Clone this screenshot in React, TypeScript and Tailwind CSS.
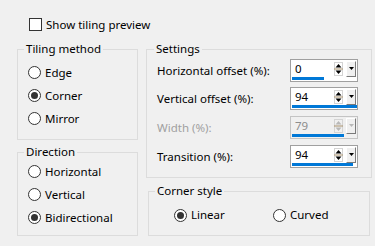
import type { ReactNode } from "react";

function Radio({ checked, label }: { checked?: boolean; label: string }) {
  return (
    <div className="flex items-center gap-[4px]">
      <span className="w-[13px] h-[13px] rounded-full border border-[#333333] bg-white flex items-center justify-center shrink-0">
        {checked && <span className="w-[7px] h-[7px] rounded-full bg-[#333333]" />}
      </span>
      <span className="leading-[16px]">{label}</span>
    </div>
  );
}

function Group({ title, className, legendClass, children }: { title: string; className: string; legendClass: string; children: ReactNode }) {
  return (
    <fieldset className={`border border-[#dcdcdc] ${className}`}>
      <legend className={`px-[2px] leading-[16px] ${legendClass}`}>{title}</legend>
      {children}
    </fieldset>
  );
}

function SpinIcon({ disabled }: { disabled?: boolean }) {
  const c = disabled ? "#b8b8b8" : "#000";
  return (
    <svg width="9" height="14" viewBox="0 0 9 14" className="shrink-0">
      <rect x="0.5" y="0.5" width="8" height="13" fill="none" stroke="#d4d4d4" />
      <path d="M4.5 2 L7.5 5.5 L1.5 5.5 Z" fill={c} />
      <line x1="0" y1="7" x2="9" y2="7" stroke="#a8916c" />
      <path d="M1.5 8.5 L7.5 8.5 L4.5 12 Z" fill={c} />
    </svg>
  );
}

function Spin({ value, bar, disabled }: { value: string; bar: number; disabled?: boolean }) {
  return (
    <div className={`w-[68px] h-[23px] border flex flex-col ${disabled ? "bg-[#f0f0f0] border-[#c4c4c4]" : "bg-white border-[#a0a0a0]"}`}>
      <div className="flex items-center flex-1">
        <span className={`pl-[4px] flex-1 leading-[16px] pt-[1px] ${disabled ? "text-[#8d8d8d]" : "text-black"}`}>{value}</span>
        <SpinIcon disabled={disabled} />
        <span className="ml-[3px] mr-[1px] w-[10px] h-[16px] border-t border-l border-white border-r border-b border-r-[#7a7a7a] border-b-[#7a7a7a] bg-[#f0f0f0] flex items-center justify-center">
          <svg width="5" height="3" viewBox="0 0 5 3">
            <path d="M0 0 L5 0 L2.5 3 Z" fill={disabled ? "#b8b8b8" : "#000"} />
          </svg>
        </span>
      </div>
      <div className="h-[3px] mb-[1px] ml-[1px] bg-[#0078d7]" style={{ width: bar }} />
    </div>
  );
}

function Row({ label, value, bar, disabled, className }: { label: string; value: string; bar: number; disabled?: boolean; className?: string }) {
  return (
    <div className={`flex items-center justify-between h-[23px] ${className ?? ""}`}>
      <span className={`leading-[16px] ${disabled ? "text-[#a0a0a0]" : "text-black"}`}>{label}</span>
      <Spin value={value} bar={bar} disabled={disabled} />
    </div>
  );
}

export default function App() {
  return (
    <div className="w-[375px] h-[246px] bg-[#f0f0f0] overflow-hidden text-black text-[11.5px] font-['Noto_Sans',sans-serif] pl-[17px]">
      <div className="flex items-center gap-[4px] ml-[12px] mt-[18px] h-[13px]">
        <span className="w-[13px] h-[13px] border border-[#333333] bg-white shrink-0" />
        <span className="leading-[16px]">Show tiling preview</span>
      </div>

      <div className="flex gap-[8px] mt-[10px]">
        <div className="w-[121px] flex flex-col">
          <Group title="Tiling method" className="h-[99px]" legendClass="ml-[6px]">
            <div className="pl-[10px] pt-[4px] flex flex-col">
              <div className="h-[23px] flex items-center"><Radio label="Edge" /></div>
              <div className="h-[23px] flex items-center"><Radio label="Corner" checked /></div>
              <div className="h-[23px] flex items-center"><Radio label="Mirror" /></div>
            </div>
          </Group>
          <Group title="Direction" className="h-[92px] mt-[4px]" legendClass="ml-[6px]">
            <div className="pl-[10px] flex flex-col">
              <div className="h-[23px] flex items-center"><Radio label="Horizontal" /></div>
              <div className="h-[23px] flex items-center"><Radio label="Vertical" /></div>
              <div className="h-[23px] flex items-center"><Radio label="Bidirectional" checked /></div>
            </div>
          </Group>
        </div>

        <div className="w-[226px] flex flex-col">
          <Group title="Settings" className="h-[137px]" legendClass="ml-[7px]">
            <div className="pl-[10px] pr-[13px] pt-[2px] flex flex-col">
              <Row label="Horizontal offset (%):" value="0" bar={32} />
              <Row label="Vertical offset (%):" value="94" bar={65} className="mt-[5px]" />
              <Row label="Width (%):" value="79" bar={52} disabled className="mt-[6px]" />
              <Row label="Transition (%):" value="94" bar={61} className="mt-[6px]" />
            </div>
          </Group>
          <Group title="Corner style" className="h-[53px] mt-[5px] ml-[2px] w-[222px]" legendClass="ml-[6px]">
            <div className="pl-[25px] pt-[8px] flex items-center">
              <div className="w-[99px]"><Radio label="Linear" checked /></div>
              <Radio label="Curved" />
            </div>
          </Group>
        </div>
      </div>
    </div>
  );
}
